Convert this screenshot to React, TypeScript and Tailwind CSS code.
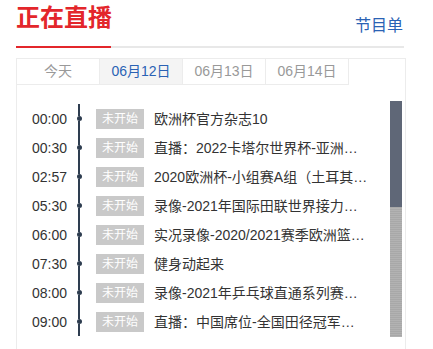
import React from "react";

const rows = [
  { time: "00:00", title: "欧洲杯官方杂志10" },
  { time: "00:30", title: "直播：2022卡塔尔世界杯-亚洲区预选赛" },
  { time: "02:57", title: "2020欧洲杯-小组赛A组（土耳其VS意大利）" },
  { time: "05:30", title: "录像-2021年国际田联世界接力赛（波兰站）" },
  { time: "06:00", title: "实况录像-2020/2021赛季欧洲篮球冠军联赛" },
  { time: "07:30", title: "健身动起来" },
  { time: "08:00", title: "录像-2021年乒乓球直通系列赛第一站" },
  { time: "09:00", title: "直播：中国席位-全国田径冠军赛暨奥运选拔赛" },
];

const tabs = ["今天", "06月12日", "06月13日", "06月14日"];

export default function App() {
  return (
    <div className="w-[433px] h-[349px] overflow-hidden bg-white pl-4 font-['Liberation_Sans','Noto_Sans_CJK_SC',sans-serif] text-[#333]">
      <div className="w-[388px] flex items-start justify-between h-[46px]">
        <h1 className="pt-[5px] text-[24px] leading-[26px] font-bold text-[#e3262b]">正在直播</h1>
        <a className="mt-[16px] mr-[1px] text-[16px] leading-[20px] text-[#2a62b4]">节目单</a>
      </div>
      <div className="w-[388px] flex h-[2px]">
        <div className="w-[95px] bg-[#e3262b]" />
        <div className="flex-1 bg-[#e8e8e8]" />
      </div>
      <div className="mt-[10px] w-[390px] h-[300px] border-t border-l border-r border-[#ececec]">
        <div className="flex">
          {tabs.map((t, i) => (
            <div
              key={t}
              className={
                i === 1
                  ? "w-[83px] h-[26px] border-r border-b border-[#ececec] bg-[#f4f4f4] text-[#2a62b4] text-[14px] leading-[25px] text-center"
                  : "w-[83px] h-[26px] border-r border-b border-[#ececec] text-[#999] text-[14px] leading-[25px] text-center"
              }
            >
              {t}
            </div>
          ))}
        </div>
        <div className="flex">
          <div className="flex-1 pt-[19px]">
            {rows.map((r) => (
              <div key={r.time} className="flex h-[29px] items-center">
                <div className="w-[51px] pl-[15px] text-[14px] leading-[20px] text-[#333]">{r.time}</div>
                <div className="w-[22px] h-full flex flex-col items-center">
                  <div className="w-[2px] flex-1 bg-[#2e3d50]" />
                  <div className="w-[5px] h-[5px] rounded-full bg-[#2e3d50]" />
                  <div className="w-[2px] flex-1 bg-[#2e3d50]" />
                </div>
                <div className="ml-[6px] w-[48px] h-[20px] bg-[#c9c9c9] text-white text-[12px] leading-[20px] text-center">
                  未开始
                </div>
                <div className="ml-[10px] w-[214px] truncate text-[14px] leading-[20px] text-[#333]">{r.title}</div>
              </div>
            ))}
          </div>
          <div className="mt-[16px] mr-[3px] w-[12px] h-[236px] flex flex-col bg-[repeating-linear-gradient(180deg,#a8a8a8_0px,#a8a8a8_1px,#b2b2b2_1px,#b2b2b2_2px)]">
            <div className="h-[106px] bg-[#5f6777]" />
          </div>
        </div>
      </div>
    </div>
  );
}
